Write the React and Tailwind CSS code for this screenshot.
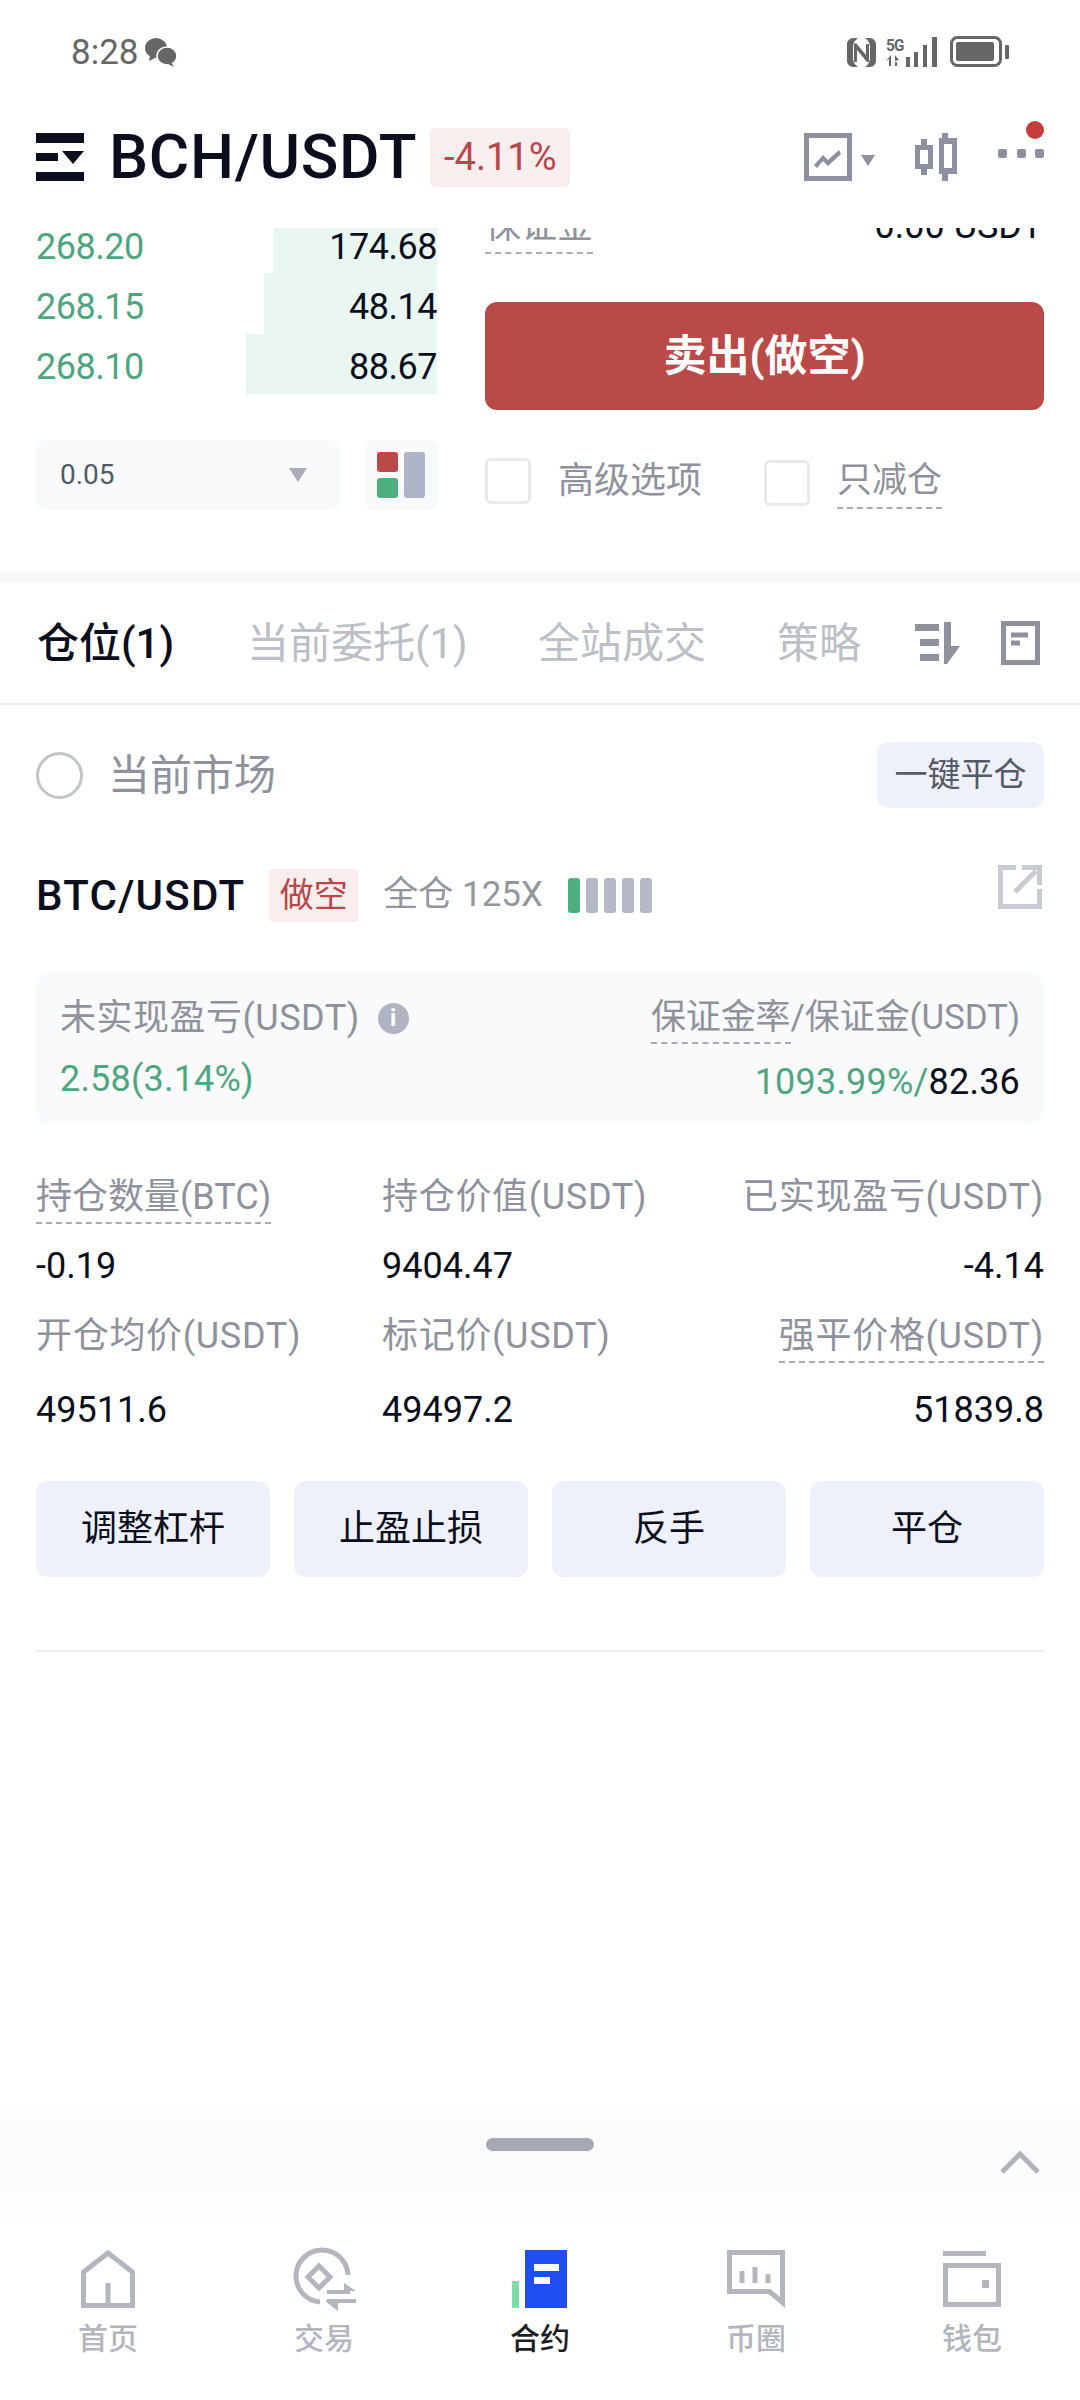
import React from 'react';

const bookRows = [
  { price: '268.20', size: '174.68', bar: 'w-[163px]', row: 'h-[45px] pb-[8px]' },
  { price: '268.15', size: '48.14', bar: 'w-[173px]', row: 'h-[61px] pt-[6px]' },
  { price: '268.10', size: '88.67', bar: 'w-[191px]', row: 'h-[60px] pt-[5px]' },
];

const stats = [
  [
    { label: '持仓数量(BTC)', value: '-0.19', dashed: true },
    { label: '持仓价值(USDT)', value: '9404.47' },
    { label: '已实现盈亏(USDT)', value: '-4.14', right: true },
  ],
  [
    { label: '开仓均价(USDT)', value: '49511.6' },
    { label: '标记价(USDT)', value: '49497.2' },
    { label: '强平价格(USDT)', value: '51839.8', right: true, dashed: true },
  ],
];

function StatusIcons() {
  return (
    <div className="flex items-center text-[#666]">
      <svg width="29" height="29" viewBox="0 0 29 29" fill="#666">
        <path d="M6 0h5c-3 2-5 5-5 9v11c0 4 2 7 5 9H6c-3 0-6-3-6-6V6c0-3 3-6 6-6z" />
        <path d="M23 29h-5c3-2 5-5 5-9V9c0-4-2-7-5-9h5c3 0 6 3 6 6v17c0 3-3 6-6 6z" />
        <path d="M7 6l2-1 10 12V6h3v18l-2 0L10 12v12H7z" />
      </svg>
      <div className="ml-[10px] flex items-end gap-[1px]">
        <div className="flex flex-col items-start">
          <span className="text-[17px] leading-[15px] font-bold tracking-[-1px] scale-x-90 origin-left">5G</span>
          <svg width="18" height="13" viewBox="0 0 18 13" fill="#666" className="mt-[1px]">
            <path d="M5 1v11H3V5L0 7zM9 1l4 5-4 1zM9 8h2v4H9z" />
          </svg>
        </div>
        <svg width="32" height="30" viewBox="0 0 32 30" fill="#666">
          <rect x="0" y="20" width="4" height="10" />
          <rect x="8" y="15" width="4" height="15" />
          <rect x="17" y="8" width="4" height="22" />
          <rect x="26" y="0" width="5" height="30" />
        </svg>
      </div>
      <svg width="60" height="32" viewBox="0 0 60 32" className="ml-[12px]">
        <rect x="1.5" y="1.5" width="49" height="28" rx="6" fill="none" stroke="#666" strokeWidth="3" />
        <rect x="6" y="6" width="38" height="19" rx="2" fill="#666" />
        <rect x="55" y="9" width="4" height="14" rx="1" fill="#666" />
      </svg>
    </div>
  );
}

function HeaderIcons() {
  return (
    <div className="flex items-center">
      <svg width="48" height="48" viewBox="0 0 48 48" fill="#8d909e">
        <path d="M0 0h48v48H0zM5 5v38h38V5z" fillRule="evenodd" />
        <path d="M10 32l9-10 5 5 11-10 2 4-13 12-5-5-6 7z" />
      </svg>
      <svg width="14" height="11" viewBox="0 0 14 11" fill="#8d909e" className="ml-[9px] mt-[6px]">
        <path d="M0 0h14l-7 11z" />
      </svg>
      <svg width="42" height="48" viewBox="0 0 42 48" fill="#8d909e" className="ml-[40px]">
        <path d="M6 6h6v6h6v24h-6v6H6v-6H0V12h6zM5 17v14h8V17z" fillRule="evenodd" />
        <path d="M27 0h6v5h9v36h-9v7h-6v-7h-3V5h3zM29 11v24h8V11z" fillRule="evenodd" />
      </svg>
      <div className="relative ml-[41px] flex h-[48px] w-[46px] items-center justify-between self-center pb-[7px]">
        <span className="size-[9px] rounded-[2px] bg-[#8d909e]" />
        <span className="size-[9px] rounded-[2px] bg-[#8d909e]" />
        <span className="size-[9px] rounded-[2px] bg-[#8d909e]" />
        <span className="absolute -top-[12px] right-0 size-[18px] rounded-full bg-[#c43c3c]" />
      </div>
    </div>
  );
}

function NavIcon({ name }) {
  if (name === 'home') {
    return (
      <svg width="54" height="58" viewBox="0 0 54 58" fill="none" stroke="#b3b6bd" strokeWidth="5">
        <path d="M2.500 55.500V22L27 3l24.500 19v33.500zM27 33v22" />
      </svg>
    );
  }
  if (name === 'trade') {
    return (
      <svg width="66" height="64" viewBox="0 0 66 64" fill="none" stroke="#b3b6bd" strokeWidth="5">
        <path d="M57 28A26 26 0 1 0 29 55" />
        <path d="M28 19l11 11-11 11-11-11z" />
        <path d="M36 45h23" strokeWidth="4" />
        <path d="M36 54h29" strokeWidth="4" />
        <path d="M53 36l12 8H53zM47 52v12l-13-10z" fill="#b3b6bd" stroke="none" />
      </svg>
    );
  }
  if (name === 'contract') {
    return (
      <svg width="56" height="58" viewBox="0 0 56 58">
        <rect x="0" y="31" width="7" height="27" fill="#7edcaa" />
        <rect x="13" y="0" width="42" height="58" fill="#1f4ef0" />
        <rect x="22" y="14" width="25" height="7" fill="#fff" />
        <rect x="22" y="27" width="16" height="7" fill="#fff" />
      </svg>
    );
  }
  if (name === 'circle') {
    return (
      <svg width="58" height="58" viewBox="0 0 58 58" fill="none" stroke="#b3b6bd" strokeWidth="5">
        <path d="M2.500 2.500h53v50l-13-11H2.500z" />
        <path d="M15 21v12M28 17v16M41 24v9" strokeWidth="5" />
      </svg>
    );
  }
  return (
    <svg width="58" height="56" viewBox="0 0 58 56" fill="none" stroke="#b3b6bd" strokeWidth="5">
      <path d="M0 2.500h43" />
      <path d="M2.500 14.500h53v39h-53z" />
      <rect x="39" y="29" width="7" height="8" fill="#b3b6bd" stroke="none" />
    </svg>
  );
}

export default function App() {
  return (
    <div className="flex h-[2400px] w-[1080px] flex-col overflow-hidden bg-white font-[Roboto,'Noto_Sans_CJK_SC',sans-serif] text-[#0b0e1c]">
      {/* status bar */}
      <div className="flex h-[104px] items-center justify-between pl-[71px] pr-[70px]">
        <div className="flex items-center gap-[6px] text-[#666]">
          <span className="text-[35px] leading-none">8:28</span>
          <svg width="32" height="30" viewBox="0 0 32 30" fill="#666">
            <ellipse cx="11" cy="11" rx="11" ry="10" />
            <ellipse cx="22" cy="19" rx="10" ry="9" stroke="#fff" strokeWidth="1.500" />
            <path d="M5 18l-1 6 6-3zM26 25l3 5-6-3z" />
          </svg>
        </div>
        <StatusIcons />
      </div>

      {/* title bar */}
      <div className="flex h-[124px] items-center justify-between pb-[18px] pl-[36px] pr-[36px]">
        <div className="flex items-center">
          <svg width="48" height="48" viewBox="0 0 48 48" fill="#0b0e1c">
            <rect x="0" y="0" width="48" height="10" />
            <rect x="0" y="20" width="22" height="8" />
            <path d="M26 18h22l-11 13z" />
            <rect x="0" y="39" width="48" height="9" />
          </svg>
          <span className="ml-[25px] text-[62px] font-medium leading-none tracking-[0.7px]">BCH/USDT</span>
          <span className="ml-[13px] flex h-[59px] w-[140px] items-center justify-center rounded-[6px] bg-[#f9eeee] text-[38px] text-[#b8474a]">-4.11%</span>
        </div>
        <HeaderIcons />
      </div>

      {/* order book + order form, scrolled under the title bar */}
      <div className="flex h-[344px] gap-[48px] px-[36px]">
        <div className="flex w-[401px] flex-col">
          {bookRows.map((r) => (
            <div key={r.price} className="flex justify-between">
              <span className={`flex items-center text-[36px] tracking-[-0.5px] text-[#4fa57f] ${r.row}`}>{r.price}</span>
              <span className={`flex items-center justify-end bg-[#e9f6f1] text-[36px] tracking-[-0.5px] ${r.bar} ${r.row}`}>{r.size}</span>
            </div>
          ))}
          <div className="mt-[46px] flex justify-between">
            <div className="flex h-[70px] w-[304px] items-center justify-between rounded-[8px] bg-[#f9fafb] pl-[24px] pr-[33px]">
              <span className="text-[28px] text-[#555a66]">0.05</span>
              <svg width="18" height="14" viewBox="0 0 18 14" fill="#a9adb8">
                <path d="M0 0h18l-9 14z" />
              </svg>
            </div>
            <div className="flex h-[70px] w-[72px] items-center justify-center gap-[6px] rounded-[8px] bg-[#f8f9fb]">
              <div className="flex flex-col gap-[6px]">
                <span className="block h-[20px] w-[21px] rounded-[3px] bg-[#b94a48]" />
                <span className="block h-[20px] w-[21px] rounded-[3px] bg-[#4dae80]" />
              </div>
              <span className="block h-[46px] w-[21px] rounded-[3px] bg-[#aeb4c8]" />
            </div>
          </div>
        </div>

        <div className="flex flex-1 flex-col">
          <div className="flex h-[26px] items-end justify-between overflow-hidden">
            <span className="border-b-2 border-dashed border-[#a9abb3] pb-[8px] text-[36px] leading-[36px] text-[#8f929c]">保证金</span>
            <span className="mb-[10px] pr-[1px] text-[36px] leading-[36px]">0.00 USDT</span>
          </div>
          <button className="mt-[48px] h-[108px] rounded-[12px] bg-[#b94a48] text-[43px] font-bold text-white">卖出(做空)</button>
          <div className="mt-[48px] flex items-start">
            <span className="size-[46px] rounded-[6px] border-[3px] border-[#e8e9ec]" />
            <span className="ml-[27px] text-[36px] leading-[46px] text-[#8f929c]">高级选项</span>
            <span className="ml-[62px] mt-[2px] size-[46px] rounded-[6px] border-[3px] border-[#e8e9ec]" />
            <span className="ml-[27px] border-b-2 border-dashed border-[#a9abb3] pb-[3px] text-[35px] leading-[46px] text-[#8f929c]">只减仓</span>
          </div>
        </div>
      </div>
      <div className="h-[11px] bg-[#f8f8f9]" />

      {/* tabs */}
      <div className="flex h-[122px] items-center border-b-2 border-[#ecedef] pl-[37px] pr-[40px] text-[42px]">
        <span className="w-[210px] font-medium">仓位(1)</span>
        <span className="w-[291px] text-[#bcbfc6]">当前委托(1)</span>
        <span className="w-[239px] text-[#bcbfc6]">全站成交</span>
        <span className="text-[#bcbfc6]">策略</span>
        <div className="ml-auto flex items-center gap-[41px]">
          <svg width="45" height="42" viewBox="0 0 45 42" fill="#8f929c">
            <rect x="0" y="2" width="24" height="7" />
            <rect x="5" y="17" width="19" height="7" />
            <rect x="5" y="32" width="19" height="7" />
            <path d="M29 0h7v24h9L32 42h-3z" />
          </svg>
          <svg width="39" height="44" viewBox="0 0 39 44" fill="none" stroke="#8f929c" strokeWidth="5">
            <path d="M2.500 2.500h34v39h-34z" />
            <path d="M10 14h17M10 22h9" strokeWidth="5" />
          </svg>
        </div>
      </div>

      <div className="flex flex-col px-[36px]">
        <div className="mt-[37px] flex h-[66px] items-center justify-between">
          <div className="flex items-center">
            <span className="size-[47px] rounded-full border-[3px] border-[#c2c4c8]" />
            <span className="ml-[25px] text-[42px] text-[#8f929c]">当前市场</span>
          </div>
          <button className="h-[66px] w-[167px] rounded-[12px] bg-[#eef1fa] text-[33px] text-[#555a66]">一键平仓</button>
        </div>

        <div className="mt-[61px] flex h-[53px] items-center">
          <span className="text-[42px] font-medium leading-none tracking-[1.2px]">BTC/USDT</span>
          <span className="ml-[24px] flex h-[53px] w-[89px] items-center justify-center rounded-[4px] bg-[#f9eeee] text-[34px] text-[#b8474a]">做空</span>
          <span className="ml-[25px] text-[35px] text-[#94969e]">全仓 125X</span>
          <div className="ml-[25px] flex gap-[6px]">
            <span className="h-[35px] w-[12px] rounded-[3px] bg-[#4dae80]" />
            <span className="h-[35px] w-[12px] rounded-[3px] bg-[#b4b8c6]" />
            <span className="h-[35px] w-[12px] rounded-[3px] bg-[#b4b8c6]" />
            <span className="h-[35px] w-[12px] rounded-[3px] bg-[#b4b8c6]" />
            <span className="h-[35px] w-[12px] rounded-[3px] bg-[#b4b8c6]" />
          </div>
          <svg width="44" height="44" viewBox="0 0 44 44" fill="none" stroke="#c8cbd1" strokeWidth="5" className="ml-auto mr-[2px] -mt-[18px]">
            <path d="M18 2.500H2.500v39h39V24" />
            <path d="M17 27L38 6" />
            <path d="M24 2.500h17.500V20" />
          </svg>
        </div>

        {/* unrealised pnl card */}
        <div className="mt-[50px] h-[153px] rounded-[12px] bg-[#f9fafb] px-[24px] pt-[24px]">
          <div className="flex items-start justify-between">
            <div className="flex items-center">
              <span className="text-[36px] leading-[44px] tracking-[0.5px] text-[#8f929c]">未实现盈亏(USDT)</span>
              <span className="ml-[18px] flex size-[31px] items-center justify-center rounded-full bg-[#b0b4c2] text-[24px] font-bold leading-none text-white">i</span>
            </div>
            <span className="text-[35px] leading-[44px] tracking-[-0.1px] text-[#8f929c]">
              <span className="inline-block border-b-2 border-dashed border-[#a9abb3] pb-[2px]">保证金率</span>/保证金(USDT)
            </span>
          </div>
          <div className="mt-[15px] flex items-start justify-between text-[36px] leading-[40px] tracking-[0.2px]">
            <span className="text-[#4fa57f]">2.58(3.14%)</span>
            <span className="mt-[3px] text-[#4fa57f]">
              1093.99%/<span className="text-[#0b0e1c]">82.36</span>
            </span>
          </div>
        </div>

        {/* position stats */}
        <div className="mt-[50px] flex flex-col gap-[26px]">
          {stats.map((row, i) => (
            <div key={i} className="grid grid-cols-[346px_1fr_auto]">
              {row.map((s) => (
                <div key={s.label} className={`flex flex-col ${s.right ? 'items-end' : 'items-start'}`}>
                  <span className={`border-b-2 border-dashed pb-[3px] text-[36px] leading-[44px] text-[#8f929c] ${s.dashed ? 'border-[#a9abb3]' : 'border-transparent'} ${s.label.includes('USDT') ? 'tracking-[0.7px]' : ''}`}>{s.label}</span>
                  <span className={`text-[36px] leading-[44px] ${i === 0 ? 'mt-[20px]' : 'mt-[25px]'}`}>{s.value}</span>
                </div>
              ))}
            </div>
          ))}
        </div>

        <div className="mt-[49px] grid grid-cols-4 gap-[24px]">
          {['调整杠杆', '止盈止损', '反手', '平仓'].map((t) => (
            <button key={t} className="h-[96px] rounded-[12px] bg-[#eef1fa] text-[36px]">{t}</button>
          ))}
        </div>
        <div className="mt-[73px] h-[2px] bg-[#eceef0]" />
      </div>

      {/* collapsed panel + tab bar */}
      <div className="mt-auto grid h-[135px] grid-cols-[1fr_108px_1fr] bg-gradient-to-b from-white via-[#f9fafb] via-40% to-white px-[40px] pt-[43px]">
        <span />
        <span className="h-[13px] rounded-full bg-[#a6a9b3]" />
        <svg width="40" height="24" viewBox="0 0 40 24" fill="none" stroke="#b0b3ba" strokeWidth="5" className="mt-[12px] justify-self-end">
          <path d="M2 22L20 4l18 18" />
        </svg>
      </div>
      <div className="grid h-[170px] grid-cols-5 pt-[17px]">
        {[
          { icon: 'home', label: '首页' },
          { icon: 'trade', label: '交易' },
          { icon: 'contract', label: '合约', active: true },
          { icon: 'circle', label: '币圈' },
          { icon: 'wallet', label: '钱包' },
        ].map((n) => (
          <div key={n.label} className="flex flex-col items-center">
            <div className="flex h-[64px] items-center">
              <NavIcon name={n.icon} />
            </div>
            <span className={`mt-[8px] text-[30px] font-medium leading-[40px] ${n.active ? 'text-[#1c1f26]' : 'text-[#b3b6bd]'}`}>{n.label}</span>
          </div>
        ))}
      </div>
    </div>
  );
}
